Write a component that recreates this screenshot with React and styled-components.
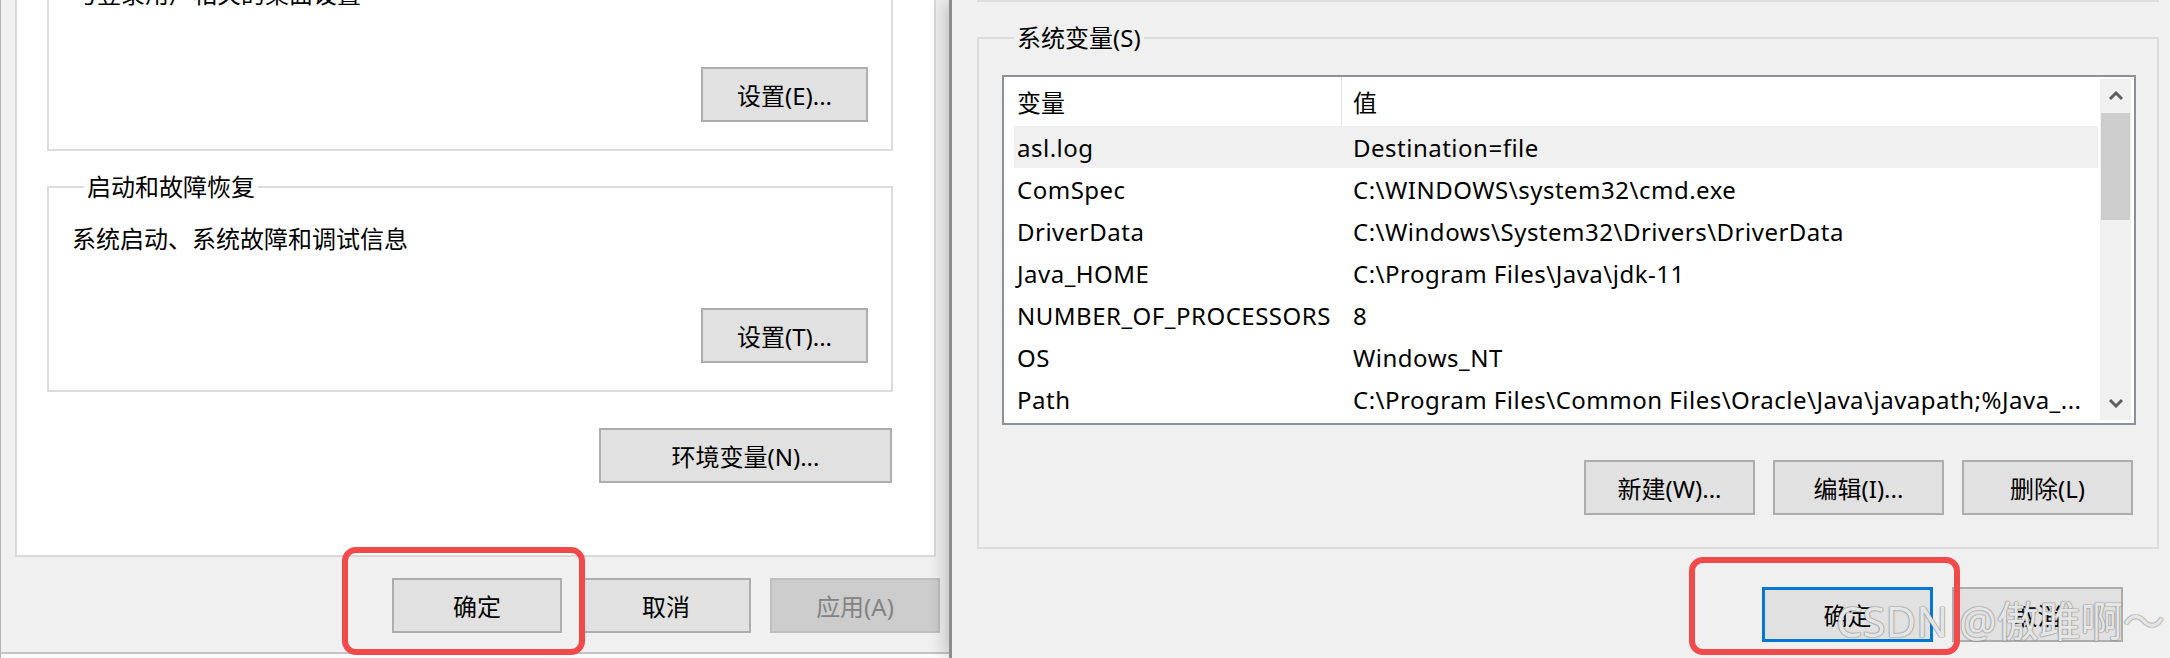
import React from 'react';
import styled, { createGlobalStyle } from 'styled-components';

const FONT = `'Noto Sans', 'Noto Sans CJK SC', sans-serif`;

const GlobalStyle = createGlobalStyle`
  html, body {
    margin: 0;
    padding: 0;
    background: #f0f0f0;
  }
  body {
    font-family: ${FONT};
  }
`;

const Screen = styled.div`
  display: flex;
  width: 2170px;
  height: 658px;
  overflow: hidden;
  font-family: ${FONT};
  font-size: 24px;
  color: #000;
`;

/* ---------- left dialog (系统属性 / 高级) ---------- */

const LeftWindow = styled.div`
  position: relative;
  flex: none;
  box-sizing: border-box;
  width: 949px;
  display: flex;
  flex-direction: column;
  background: #f0f0f0;
  border-left: 1px solid #b4b4b4;
  overflow: hidden;
`;

const TabPage = styled.div`
  box-sizing: border-box;
  width: 921px;
  margin: -92px 0 0 14px;
  padding: 18px 41px 72px 30px;
  display: flex;
  flex-direction: column;
  background: #fff;
  border: 2px solid #d9d9d9;
`;

const GroupBox = styled.fieldset`
  margin: ${(p) => p.$top || 0}px 0 0 0;
  padding: ${(p) => p.$pad || '24px 23px 27px 24px'};
  min-width: 0;
  border: 2px solid #dcdcdc;
  display: flex;
  flex-direction: column;
`;

const Legend = styled.legend`
  margin-left: 12px;
  padding: 0 3px;
  font-size: 24px;
  line-height: 28px;
`;

const Desc = styled.div`
  line-height: 28px;
  white-space: nowrap;
`;

const ButtonRow = styled.div`
  display: flex;
  justify-content: flex-end;
  gap: ${(p) => p.$gap || 18}px;
  margin-top: ${(p) => p.$top || 0}px;
  padding-right: ${(p) => p.$right || 0}px;
`;

const Button = styled.button`
  box-sizing: border-box;
  width: ${(p) => p.$width || 171}px;
  height: 55px;
  padding: 0;
  font-family: ${FONT};
  font-size: 24px;
  color: #000;
  background: #e1e1e1;
  border-style: solid;
  border-color: ${(p) => (p.$focused ? '#0078d7' : '#adadad')};
  border-width: ${(p) => (p.$focused ? '3px' : '2px')};
  white-space: nowrap;

  &:disabled {
    background: #cccccc;
    border-color: #bfbfbf;
    color: #838383;
  }
`;

const BottomEdge = styled.div`
  margin-top: auto;
  height: 4px;
  background: #fbfbfb;
  border-top: 2px solid #c4c4c4;
`;

const Callout = styled.div`
  position: absolute;
  left: ${(p) => p.$x}px;
  top: ${(p) => p.$y}px;
  width: ${(p) => p.$w}px;
  height: ${(p) => p.$h}px;
  box-sizing: border-box;
  border: 6px solid #f24a4a;
  border-radius: 14px;
  pointer-events: none;
`;

/* ---------- right dialog (环境变量) ---------- */

const RightWindow = styled.div`
  position: relative;
  z-index: 1;
  flex: 1;
  display: flex;
  flex-direction: column;
  padding: 0 11px 0 25px;
  background: #f0f0f0;
  border-left: 3px solid #8c8c8c;
  box-shadow: -6px 0 14px rgba(0, 0, 0, 0.16);
`;

const GroupTail = styled.div`
  height: 0;
  border: 2px solid #dcdcdc;
  border-top: none;
`;

const ListView = styled.div`
  display: flex;
  height: 350px;
  box-sizing: border-box;
  padding: 0 3px 3px 10px;
  background: #fff;
  border: 2px solid #8b9099;
`;

const ListBody = styled.div`
  flex: 1;
  min-width: 0;
  display: flex;
  flex-direction: column;
`;

const HeaderRow = styled.div`
  display: grid;
  grid-template-columns: 327px 1fr;
  height: 49px;
  flex: none;
`;

const HeaderCell = styled.div`
  display: flex;
  align-items: center;
  padding-left: ${(p) => (p.$value ? 11 : 3)}px;
  border-left: ${(p) => (p.$value ? '1px solid #e5e5e5' : 'none')};
`;

const Row = styled.div`
  display: grid;
  grid-template-columns: 327px 1fr;
  height: 42px;
  flex: none;
  align-items: center;
  background: ${(p) => (p.$selected ? '#f0f0f0' : '#fff')};
`;

const Cell = styled.div`
  padding-left: ${(p) => (p.$value ? 12 : 3)}px;
  letter-spacing: 0.5px;
  white-space: nowrap;
  overflow: hidden;
`;

const ScrollBar = styled.div`
  width: 31px;
  margin: 2px 0 0 2px;
  display: flex;
  flex-direction: column;
  background: #f0f0f0;
`;

const ArrowBox = styled.div`
  height: 34px;
  display: flex;
  align-items: center;
  justify-content: center;
  margin-top: ${(p) => (p.$bottom ? 'auto' : 0)};
`;

const Thumb = styled.div`
  height: 107px;
  margin: 0 1px;
  background: #cdcdcd;
`;

const Watermark = styled.div`
  position: absolute;
  left: 884px;
  top: 596px;
  font-size: 42px;
  line-height: 50px;
  white-space: nowrap;
  color: rgba(255, 255, 255, 0.8);
  text-shadow: 0 0 1px #8a8a8a, 0 0 1px #8a8a8a, 0 0 2px rgba(0, 0, 0, 0.35);
  pointer-events: none;
`;

const Chevron = ({ down }) => (
  <svg width="16" height="10" viewBox="0 0 16 10">
    <path
      d={down ? 'M2 2 L8 8 L14 2' : 'M2 8 L8 2 L14 8'}
      fill="none"
      stroke="#5f5f5f"
      strokeWidth="3"
    />
  </svg>
);

const variables = [
  ['asl.log', 'Destination=file'],
  ['ComSpec', 'C:\\WINDOWS\\system32\\cmd.exe'],
  ['DriverData', 'C:\\Windows\\System32\\Drivers\\DriverData'],
  ['Java_HOME', 'C:\\Program Files\\Java\\jdk-11'],
  ['NUMBER_OF_PROCESSORS', '8'],
  ['OS', 'Windows_NT'],
  ['Path', 'C:\\Program Files\\Common Files\\Oracle\\Java\\javapath;%Java_...'],
];

export default function App() {
  return (
    <>
      <GlobalStyle />
      <Screen>
        <LeftWindow>
          <TabPage>
            <GroupBox $pad="24px 23px 27px 24px">
              <Legend>用户配置文件</Legend>
              <Desc>与登录用户相关的桌面设置</Desc>
              <ButtonRow $top={59}>
                <Button $width={167}>设置(E)...</Button>
              </ButtonRow>
            </GroupBox>
            <GroupBox $top={22} $pad="24px 23px 27px 23px">
              <Legend>启动和故障恢复</Legend>
              <Desc>系统启动、系统故障和调试信息</Desc>
              <ButtonRow $top={55}>
                <Button $width={167}>设置(T)...</Button>
              </ButtonRow>
            </GroupBox>
            <ButtonRow $top={36} $right={1}>
              <Button $width={293}>环境变量(N)...</Button>
            </ButtonRow>
          </TabPage>
          <ButtonRow $top={21} $gap={19} $right={9}>
            <Button $width={170}>确定</Button>
            <Button $width={170}>取消</Button>
            <Button $width={170} disabled>
              应用(A)
            </Button>
          </ButtonRow>
          <BottomEdge />
          <Callout $x={341} $y={547} $w={243} $h={108} />
        </LeftWindow>

        <RightWindow>
          <GroupTail />
          <GroupBox $top={22} $pad="23px 21px 32px 23px">
            <Legend>系统变量(S)</Legend>
            <ListView>
              <ListBody>
                <HeaderRow>
                  <HeaderCell>变量</HeaderCell>
                  <HeaderCell $value>值</HeaderCell>
                </HeaderRow>
                {variables.map(([name, value], i) => (
                  <Row key={name} $selected={i === 0}>
                    <Cell>{name}</Cell>
                    <Cell $value>{value}</Cell>
                  </Row>
                ))}
              </ListBody>
              <ScrollBar>
                <ArrowBox>
                  <Chevron />
                </ArrowBox>
                <Thumb />
                <ArrowBox $bottom>
                  <Chevron down />
                </ArrowBox>
              </ScrollBar>
            </ListView>
            <ButtonRow $top={35} $right={3}>
              <Button>新建(W)...</Button>
              <Button>编辑(I)...</Button>
              <Button>删除(L)</Button>
            </ButtonRow>
          </GroupBox>
          <ButtonRow $top={38} $gap={19} $right={36}>
            <Button $focused>确定</Button>
            <Button>取消</Button>
          </ButtonRow>
          <Callout $x={737} $y={557} $w={271} $h={98} />
          <Watermark>CSDN @傲雎啊～</Watermark>
        </RightWindow>
      </Screen>
    </>
  );
}
